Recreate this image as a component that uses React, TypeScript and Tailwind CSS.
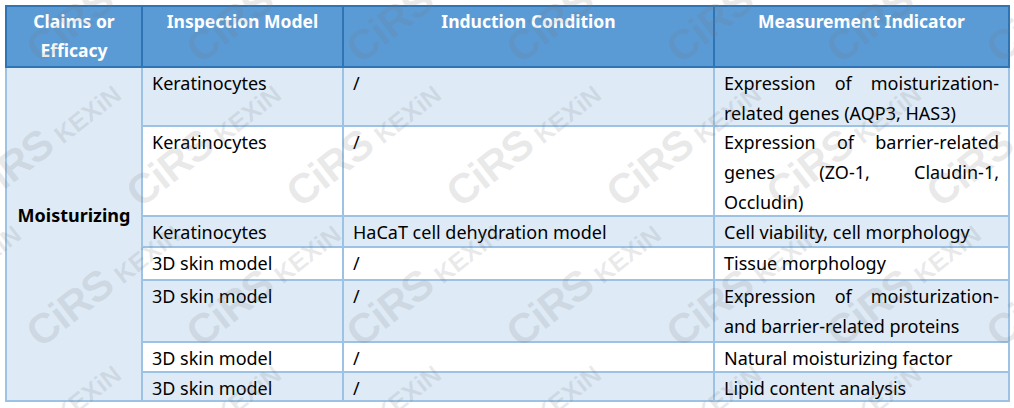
import React from 'react';

type Row = {
  model: string;
  cond: string;
  ind: string[];
  h: string;
  bg: string;
};

// h = row height minus the collapsed borders
const ROWS: Row[] = [
  { model: 'Keratinocytes', cond: '/', ind: ['Expression of moisturization-', 'related genes (AQP3, HAS3)'], h: 'h-[57px]', bg: 'bg-[#deeaf6]' },
  { model: 'Keratinocytes', cond: '/', ind: ['Expression of barrier-related', 'genes (ZO-1, Claudin-1,', 'Occludin)'], h: 'h-[88px]', bg: 'bg-white' },
  { model: 'Keratinocytes', cond: 'HaCaT cell dehydration model', ind: ['Cell viability, cell morphology'], h: 'h-[29px]', bg: 'bg-[#deeaf6]' },
  { model: '3D skin model', cond: '/', ind: ['Tissue morphology'], h: 'h-[31px]', bg: 'bg-white' },
  { model: '3D skin model', cond: '/', ind: ['Expression of moisturization-', 'and barrier-related proteins'], h: 'h-[60px]', bg: 'bg-[#deeaf6]' },
  { model: '3D skin model', cond: '/', ind: ['Natural moisturizing factor'], h: 'h-[28px]', bg: 'bg-white' },
  { model: '3D skin model', cond: '/', ind: ['Lipid content analysis'], h: 'h-[27px]', bg: 'bg-[#deeaf6]' },
];

// watermark rows: [baseline y, x phase]
const MARK_ROWS: [number, number][] = [
  [66, 46],
  [210, 146],
  [350, 46],
  [490, 146],
];

function Watermark() {
  const marks: { x: number; y: number }[] = [];
  MARK_ROWS.forEach(([y, phase]) => {
    for (let x = phase - 160; x < 1014; x += 160) marks.push({ x, y });
  });
  return (
    <div className="pointer-events-none absolute inset-0 overflow-hidden">
      {marks.map((m, i) => (
        <div
          key={i}
          className="absolute flex h-[44px] items-baseline whitespace-nowrap font-bold leading-none text-[rgba(120,120,120,0.16)] [font-family:'Liberation_Sans',Arial,sans-serif] origin-bottom-left -rotate-[38deg]"
          style={{ left: m.x, top: m.y - 38 }}
        >
          <span className="text-[42px] tracking-[-1px]">CiRS</span>
          <span className="ml-[8px] text-[25px]">KEXiN</span>
        </div>
      ))}
    </div>
  );
}

export default function App() {
  const cell = 'border-2 border-[#9cc2e5] px-[9px] py-0 align-top';
  const head = 'border-2 border-[#2f75b5] px-[9px] py-0 align-top text-center font-bold text-white';

  return (
    <div className="relative h-[408px] w-[1014px] overflow-hidden bg-white [font-family:'Noto_Sans',sans-serif]">
      <table className="ml-[5px] mt-[5px] w-[1003px] table-fixed border-collapse text-[18px] leading-[30px] text-black">
        <colgroup>
          <col className="w-[136px]" />
          <col className="w-[201px]" />
          <col className="w-[371px]" />
          <col className="w-[295px]" />
        </colgroup>
        <thead>
          <tr className="bg-[#5b9bd5] text-[17.5px] leading-[29px]">
            <th className={head}>
              <div className="h-[59px]">
                Claims or
                <br />
                Efficacy
              </div>
            </th>
            <th className={head}>
              <div className="h-[59px]">Inspection Model</div>
            </th>
            <th className={head}>
              <div className="h-[59px]">Induction Condition</div>
            </th>
            <th className={head}>
              <div className="h-[59px]">Measurement Indicator</div>
            </th>
          </tr>
        </thead>
        <tbody>
          {ROWS.map((r, i) => (
            <tr key={i} className={r.bg}>
              {i === 0 && (
                <td rowSpan={ROWS.length} className={`${cell} bg-[#deeaf6] text-center font-bold`}>
                  <div className="pt-[132px]">Moisturizing</div>
                </td>
              )}
              <td className={cell}>
                <div className={r.h}>{r.model}</div>
              </td>
              <td className={cell}>
                <div className={r.h}>{r.cond}</div>
              </td>
              <td className={cell}>
                <div className={r.h}>
                  {r.ind.map((line, j) => (
                    <div
                      key={j}
                      className={j < r.ind.length - 1 ? 'h-[30px] text-justify [text-align-last:justify]' : 'h-[27px] text-left'}
                    >
                      {line}
                    </div>
                  ))}
                </div>
              </td>
            </tr>
          ))}
        </tbody>
      </table>
      <Watermark />
    </div>
  );
}
